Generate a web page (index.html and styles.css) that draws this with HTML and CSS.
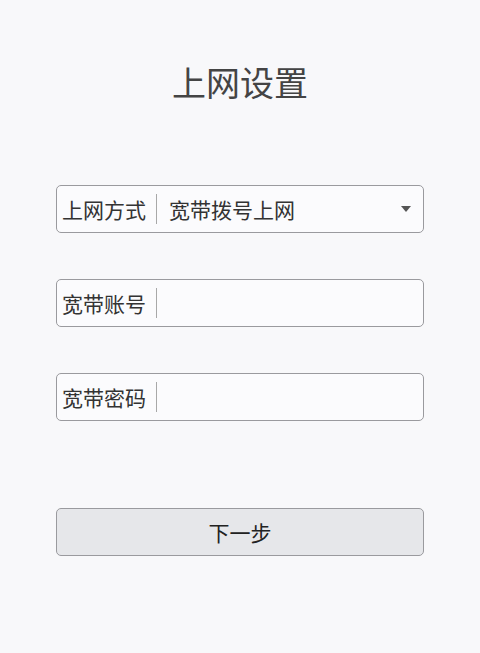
FILE: index.html
```html
<!doctype html>
<html lang="zh-CN">
<head>
  <meta charset="utf-8">
  <title>上网设置</title>
  <link rel="stylesheet" href="styles.css">
</head>
<body>
<div class="page">
    <h1 class="title">上网设置</h1>
    <div class="field">
        <span class="label">上网方式</span>
        <span class="value">宽带拨号上网</span>
        <span class="caret"></span>
    </div>
    <div class="field">
        <span class="label">宽带账号</span>
        <span class="value"></span>
    </div>
    <div class="field">
        <span class="label">宽带密码</span>
        <span class="value"></span>
    </div>
    <div class="btn">下一步</div>
</div>
</body>
</html>
```

FILE: styles.css
```css
* {
    margin: 0;
    padding: 0;
    box-sizing: border-box;
}
body {
    background-color: #f8f8fa;
    font-family: "Noto Sans CJK SC", "Noto Sans", sans-serif;
    color: #333;
}
.page {
    width: 368px;
    margin: 0 auto;
    padding-top: 60px;
    display: flex;
    flex-direction: column;
}
.title {
    font-size: 34px;
    font-weight: normal;
    color: #444;
    text-align: center;
    line-height: 44px;
    margin-bottom: 81px;
}
.field {
    height: 48px;
    border: 1px solid #9a9a9e;
    border-radius: 5px;
    background-color: #fbfbfd;
    display: flex;
    align-items: center;
    margin-bottom: 46px;
}
.label {
    font-size: 21px;
    line-height: 30px;
    padding: 0 10px 0 5px;
    border-right: 1px solid #a8a8a8;
    color: #333;
}
.value {
    flex: 1;
    font-size: 21px;
    line-height: 30px;
    padding-left: 12px;
    color: #333;
}
.caret {
    width: 0;
    height: 0;
    border-left: 5px solid transparent;
    border-right: 5px solid transparent;
    border-top: 6px solid #555;
    margin-right: 12px;
}
.btn {
    margin-top: 41px;
    height: 48px;
    border: 1px solid #9a9a9e;
    border-radius: 5px;
    background-color: #e6e7ea;
    font-size: 21px;
    color: #222;
    display: flex;
    align-items: center;
    justify-content: center;
}
```
